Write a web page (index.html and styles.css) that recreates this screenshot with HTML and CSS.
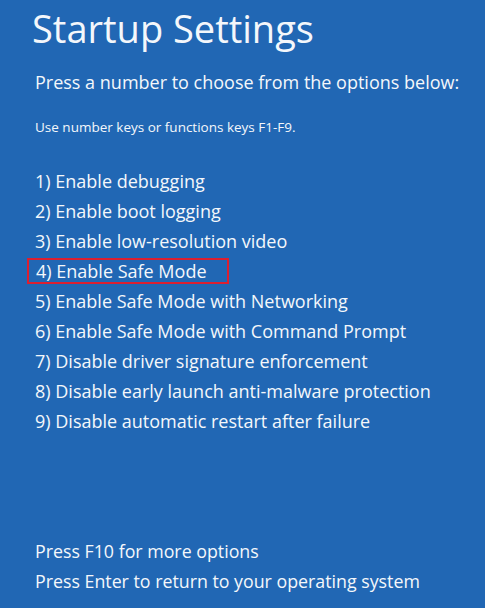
FILE: index.html
```html
<!DOCTYPE html>
<html lang="en">
<head>
<meta charset="utf-8">
<title>Startup Settings</title>
<link rel="stylesheet" href="styles.css">
</head>
<body>
<main class="screen">
  <h1 class="title">Startup Settings</h1>
  <p class="prompt">Press a number to choose from the options below:</p>
  <p class="hint">Use number keys or functions keys F1-F9.</p>
  <ol class="options">
    <li class="option">1) Enable debugging</li>
    <li class="option">2) Enable boot logging</li>
    <li class="option">3) Enable low-resolution video</li>
    <li class="option option-marked">4) Enable Safe Mode</li>
    <li class="option">5) Enable Safe Mode with Networking</li>
    <li class="option">6) Enable Safe Mode with Command Prompt</li>
    <li class="option">7) Disable driver signature enforcement</li>
    <li class="option">8) Disable early launch anti-malware protection</li>
    <li class="option">9) Disable automatic restart after failure</li>
  </ol>
  <div class="footer">
    <p class="footer-line">Press F10 for more options</p>
    <p class="footer-line">Press Enter to return to your operating system</p>
  </div>
</main>
</body>
</html>
```
FILE: styles.css
```css
html, body {
  margin: 0;
  padding: 0;
  background: #2167b4;
}
.screen {
  box-sizing: border-box;
  width: 485px;
  height: 608px;
  padding: 0 0 0 35px;
  display: flex;
  flex-direction: column;
  font-family: "Open Sans", "Noto Sans", sans-serif;
  color: #f4f7fb;
  overflow: hidden;
}
.title {
  margin: 4px 0 0 -3px;
  font-size: 38px;
  font-weight: 400;
  line-height: 48px;
}
.prompt {
  margin: 18px 0 0 0;
  font-size: 18px;
  line-height: 24px;
}
.hint {
  margin: 24px 0 0 0;
  font-size: 13.5px;
  line-height: 18px;
}
.options {
  list-style: none;
  margin: 30px 0 0 0;
  padding: 0;
}
.option {
  font-size: 18px;
  line-height: 30px;
  height: 30px;
}
.option-marked {
  box-sizing: border-box;
  width: 202px;
  height: 26px;
  margin: 2px 0 2px -8px;
  padding-left: 7px;
  border: 2px solid #dc1f30;
  line-height: 22px;
}
.footer {
  margin-top: auto;
  padding-bottom: 12px;
}
.footer-line {
  margin: 0;
  font-size: 17.8px;
  line-height: 30px;
}
```
